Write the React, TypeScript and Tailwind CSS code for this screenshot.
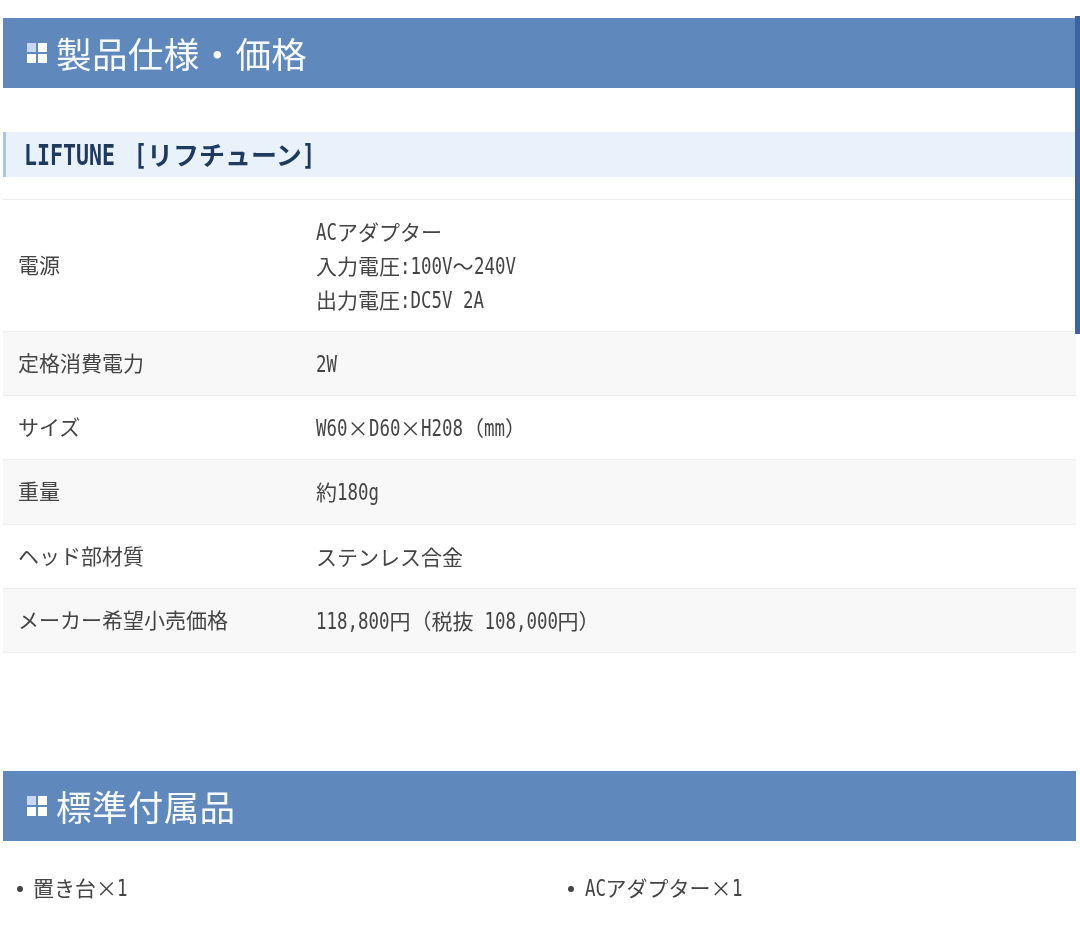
import type { ReactNode } from "react";

const font = { fontFamily: '"Noto Sans CJK JP", sans-serif' };

/* Half-width Latin run: monospaced, squeezed so each character takes half an em. */
function L({ children, size = 21 }: { children: string; size?: number }) {
  return (
    <span className="inline-block whitespace-pre leading-none" style={{ width: children.length * size * 0.5 }}>
      <span className="inline-block origin-left scale-x-[0.755] whitespace-pre font-['DejaVu_Sans_Mono',monospace] text-[1.1em] leading-none">
        {children}
      </span>
    </span>
  );
}

function Icon() {
  return (
    <span className="grid h-[20px] w-[20px] shrink-0 grid-cols-2 gap-[2px]">
      <span className="bg-[#c8d9ee]" />
      <span className="bg-white" />
      <span className="bg-white" />
      <span className="bg-white" />
    </span>
  );
}

function SectionHeader({ title }: { title: string }) {
  return (
    <h2 className="flex h-[70px] items-center gap-[9px] bg-[#5f88bd] pl-[24px] text-[35.6px] font-normal tracking-[0.3px] text-[#f8fafd]">
      <Icon />
      <span className="-mt-[1px] leading-none">{title}</span>
    </h2>
  );
}

const rows: { label: string; value: ReactNode[]; h: string; bg: string }[] = [
  {
    label: "電源",
    value: [
      <><L>AC</L>アダプター</>,
      <>入力電圧<L>:100V</L>〜<L>240V</L></>,
      <>出力電圧<L>:DC5V 2A</L></>,
    ],
    h: "h-[132px]",
    bg: "bg-white",
  },
  { label: "定格消費電力", value: [<L>2W</L>], h: "h-[64px]", bg: "bg-[#f8f8f8]" },
  { label: "サイズ", value: [<><L>W60</L>×<L>D60</L>×<L>H208</L>（<L>mm</L>）</>], h: "h-[64px]", bg: "bg-white" },
  { label: "重量", value: [<>約<L>180g</L></>], h: "h-[65px]", bg: "bg-[#f8f8f8]" },
  { label: "ヘッド部材質", value: ["ステンレス合金"], h: "h-[64px]", bg: "bg-white" },
  {
    label: "メーカー希望小売価格",
    value: [<><L>118,800</L>円（税抜<L> 108,000</L>円）</>],
    h: "h-[64px]",
    bg: "bg-[#f8f8f8]",
  },
];

export default function App() {
  return (
    <div
      className="relative h-[949px] w-[1080px] overflow-hidden bg-white pl-[3px] pr-[4px] pt-[18px] blur-[0.35px]"
      style={font}
    >
      <div className="absolute right-0 top-[16px] h-[318px] w-[5px] bg-[#3a65a0]" />
      <SectionHeader title="製品仕様・価格" />

      <h3 className="mt-[44px] flex h-[45px] items-center border-l-[3px] border-[#a9c6e0] bg-[#e9f1fb] pl-[18px] text-[26px] font-bold text-[#1f3a5f]">
        <span className="-mt-[2px]">
          <L size={26}>LIFTUNE</L>
          <span className="ml-[19px]">
            <L size={26}>[</L>リフチューン<L size={26}>]</L>
          </span>
        </span>
      </h3>

      <div className="mt-[22px] border-t border-[#eeeeee] text-[21px] text-[#444444]">
        {rows.map((r) => (
          <div key={r.label} className={`flex items-center border-b border-[#eeeeee] ${r.h} ${r.bg}`}>
            <div className="-mt-[2px] w-[313px] shrink-0 pl-[15px]">{r.label}</div>
            <div className="-mt-[2px] leading-[34px]">
              {r.value.map((line, i) => (
                <div key={i}>{line}</div>
              ))}
            </div>
          </div>
        ))}
      </div>

      <div className="mt-[118px]">
        <SectionHeader title="標準付属品" />
      </div>

      <ul className="mt-[30px] grid grid-cols-2 text-[21px] leading-[32px] text-[#444444]">
        <li className="flex items-center gap-[10px] pl-[14px]">
          <span className="mt-[3px] h-[6px] w-[6px] rounded-full bg-[#444444]" />
          <span>置き台×<L>1</L></span>
        </li>
        <li className="flex items-center gap-[11px] pl-[28px]">
          <span className="mt-[3px] h-[6px] w-[6px] rounded-full bg-[#444444]" />
          <span><L>AC</L>アダプター×<L>1</L></span>
        </li>
      </ul>
    </div>
  );
}
